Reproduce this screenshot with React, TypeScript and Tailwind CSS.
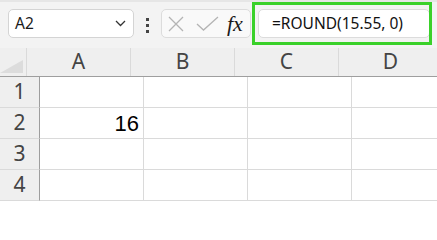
import React from 'react';

const ui = { fontFamily: '"Noto Sans", "Open Sans", sans-serif' };
const cols = ['A', 'B', 'C', 'D'];
const rows = [1, 2, 3, 4];

const App: React.FC = () => {
  return (
    <div className="relative w-[437px] h-[201px] overflow-hidden bg-[#f3f3f3]" style={ui}>
      <div className="h-[2px] bg-[#e6e6e6]" />

      {/* formula bar */}
      <div className="flex items-start h-[46px] pt-[7px] pl-[8px]">
        <div className="w-[126px] h-[29px] bg-white border border-[#d4d4d4] rounded-[5px] flex items-center justify-between pl-[6px] pr-[6px]">
          <span className="text-[15.5px] text-[#1a1a1a] leading-none">A2</span>
          <svg width="11" height="7" viewBox="0 0 11 7" className="mr-[1px]">
            <path d="M1 1 L5.5 5.5 L10 1" fill="none" stroke="#333" strokeWidth="1.3" />
          </svg>
        </div>
        <div className="flex flex-col gap-[3px] mt-[9px] ml-[12px]">
          <div className="w-[3px] h-[3px] bg-[#444]" />
          <div className="w-[3px] h-[3px] bg-[#444]" />
          <div className="w-[3px] h-[3px] bg-[#444]" />
        </div>
        <div className="ml-[12px] w-[90px] h-[29px] bg-[#f9f9f9] border border-[#dcdcdc] rounded-[5px] flex items-center pl-[6px]">
          <svg width="16" height="16" viewBox="0 0 16 16">
            <path d="M1 1 L15 15 M15 1 L1 15" stroke="#b4b4b4" strokeWidth="1.3" fill="none" />
          </svg>
          <svg width="23" height="15" viewBox="0 0 23 15" className="ml-[12px]">
            <path d="M1 8 L7.5 14 L22 1" stroke="#b4b4b4" strokeWidth="1.3" fill="none" />
          </svg>
          <span
            className="ml-[8px] text-[22px] italic text-[#1a1a1a] leading-none"
            style={{ fontFamily: '"Liberation Serif", "DejaVu Serif", serif' }}
          >
            fx
          </span>
        </div>
        <div className="ml-[7px] w-[172px] h-[29px] bg-white border border-[#dcdcdc] rounded-[5px] flex items-center pl-[13px]">
          <span className="text-[15.5px] text-[#111] leading-none">=ROUND(15.55, 0)</span>
        </div>
      </div>

      {/* highlight around formula */}
      <div className="absolute left-[252px] top-[2px] w-[180px] h-[43px] border-[3px] border-[#3ad12a]" />

      {/* grid */}
      <div className="flex h-[29px] bg-[#efefef] border-b border-[#9e9e9e]">
        <div className="w-[40px] border-r border-[#dadada] flex items-end justify-end pr-[3px] pb-[3px]">
          <svg width="23" height="13" viewBox="0 0 23 13">
            <path d="M23 0 L23 13 L0 13 Z" fill="#dcdcdc" />
          </svg>
        </div>
        {cols.map((c) => (
          <div
            key={c}
            className="w-[104px] shrink-0 border-r border-[#dadada] flex items-center justify-center text-[21px] text-[#444]"
          >
            {c}
          </div>
        ))}
      </div>
      {rows.map((r) => (
        <div key={r} className="flex h-[31px]">
          <div className="w-[40px] shrink-0 bg-[#efefef] border-r border-b border-r-[#9e9e9e] border-b-[#dadada] flex items-center justify-center text-[21px] text-[#444]">
            {r}
          </div>
          {cols.map((c) => (
            <div
              key={c}
              className="w-[104px] shrink-0 bg-white border-r border-b border-[#dadada] flex items-center justify-end pr-[4px] text-[22px] text-black"
              style={{ fontFamily: '"Liberation Sans", Arial, sans-serif' }}
            >
              {r === 2 && c === 'A' ? '16' : ''}
            </div>
          ))}
        </div>
      ))}
    </div>
  );
};

export default App;
